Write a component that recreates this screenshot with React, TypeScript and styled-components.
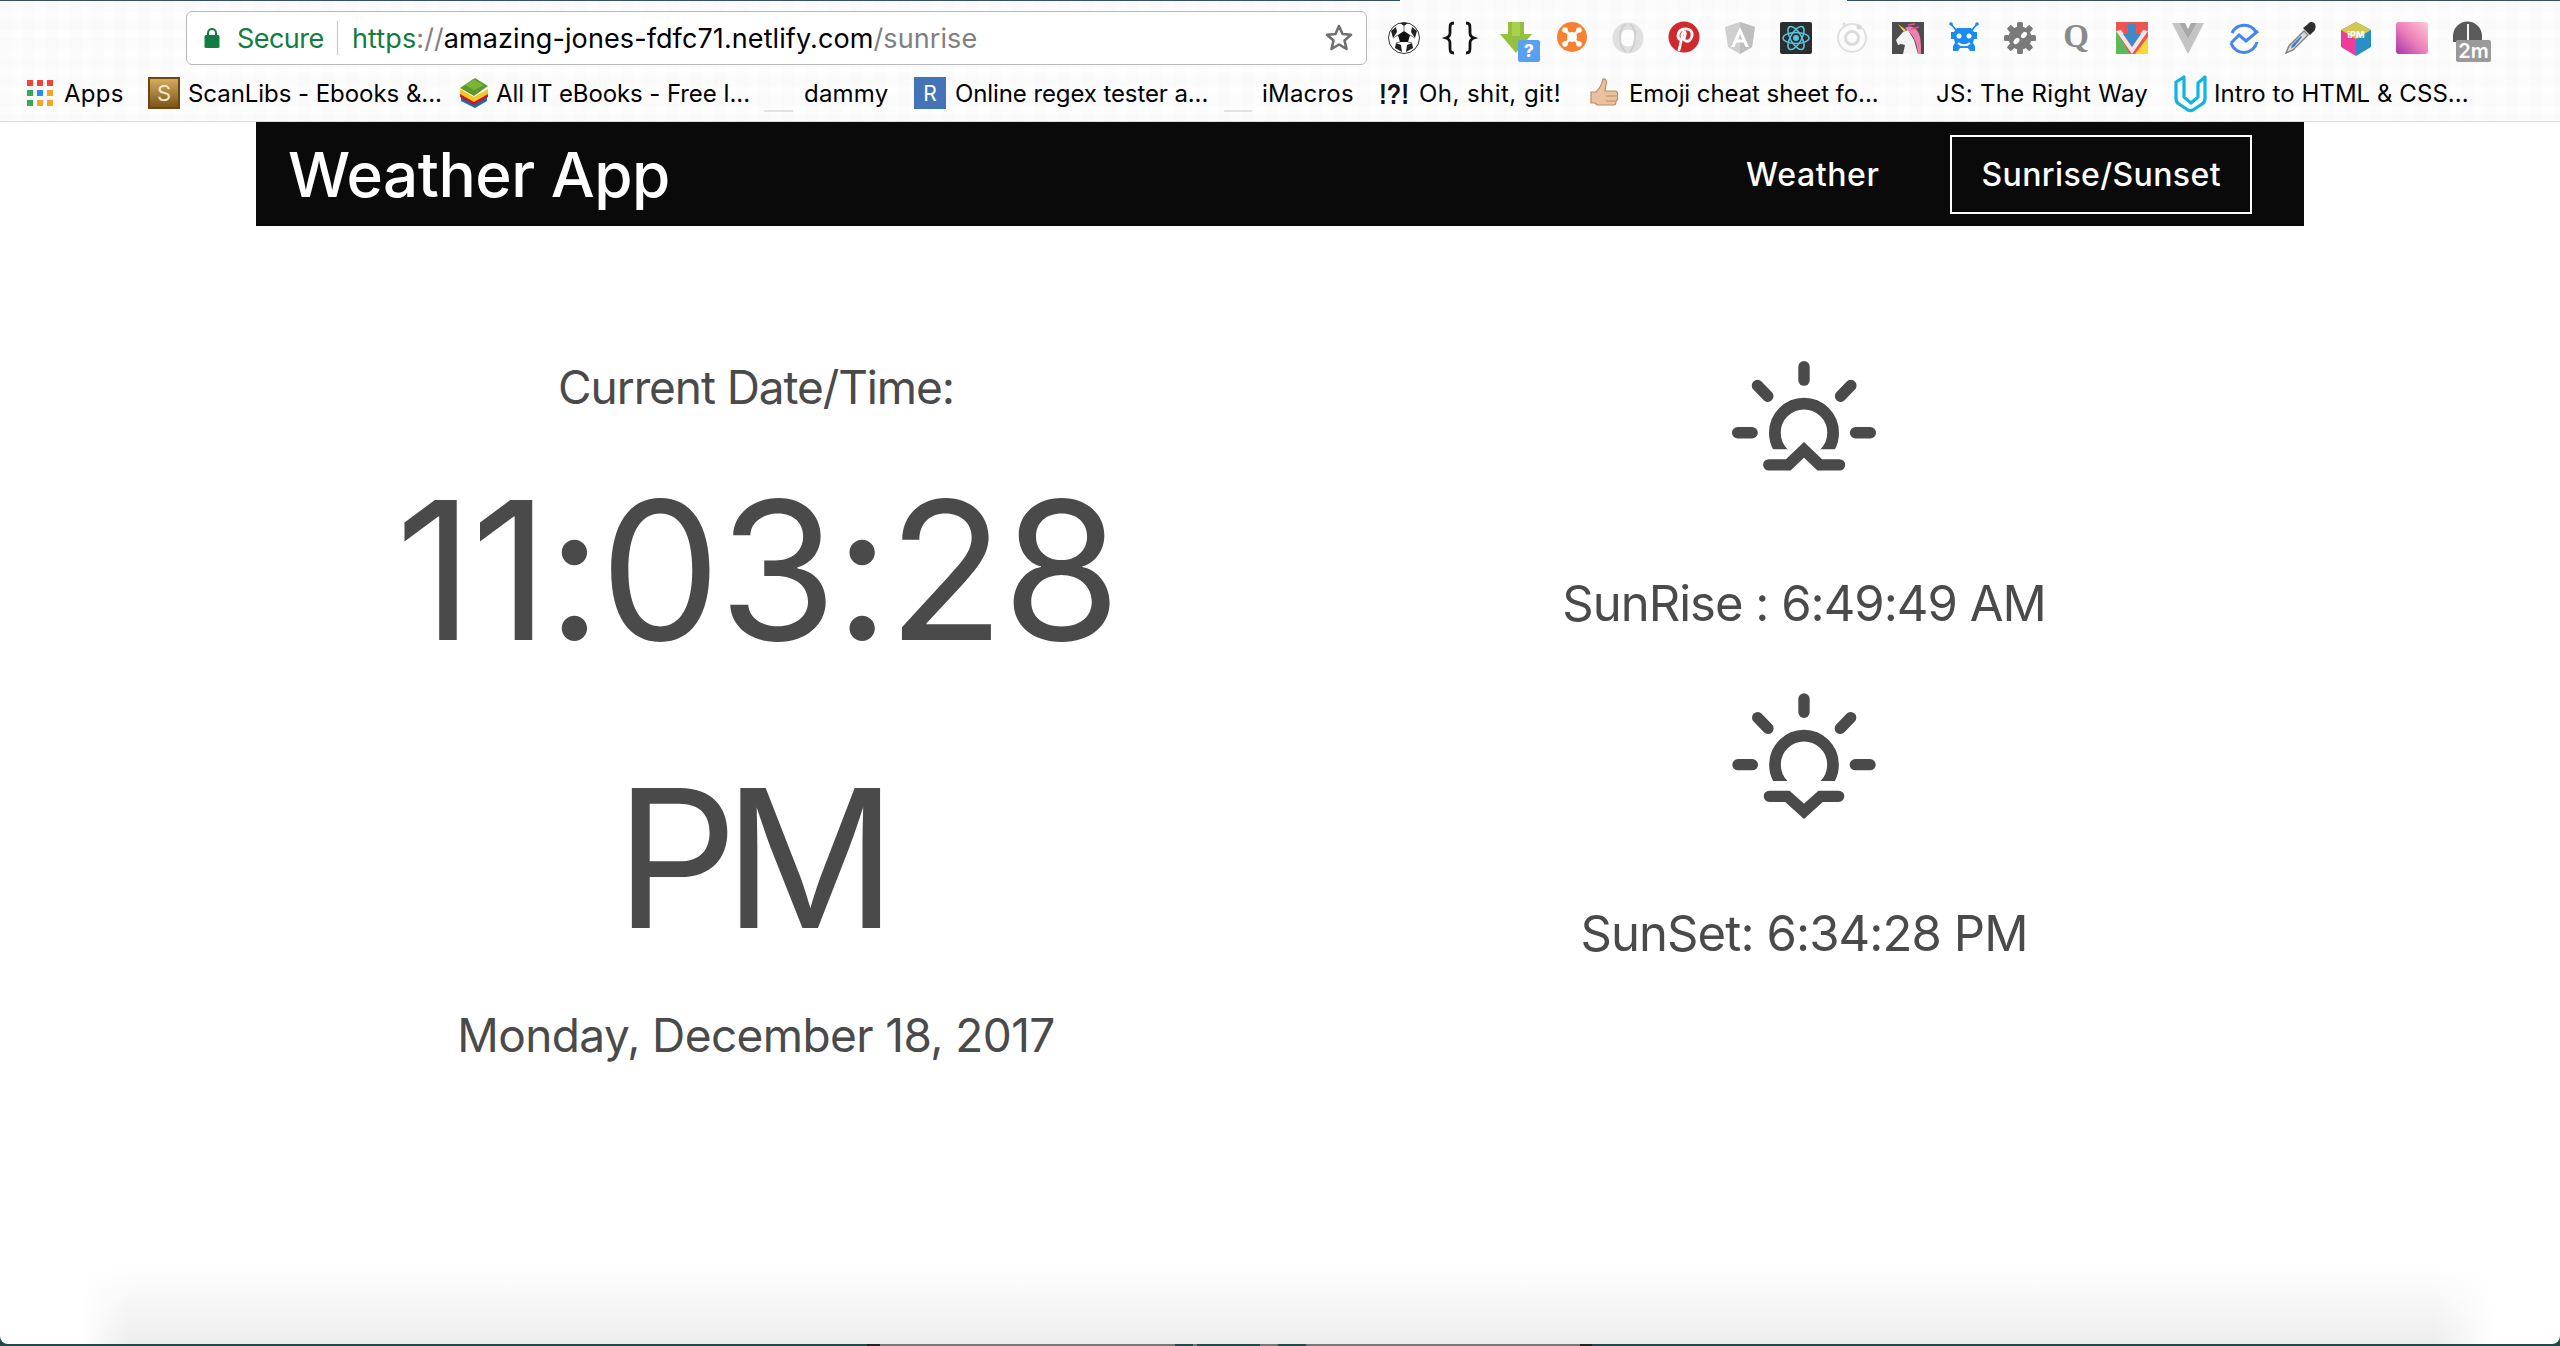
import React from "react";
import styled, { createGlobalStyle } from "styled-components";

const Global = createGlobalStyle`
  html, body { margin: 0; padding: 0; background: #1f4a4c; }
  body { font-family: Inter, "Noto Sans", sans-serif; color: #4a4a4a; }
  * { box-sizing: border-box; }
`;

const Screen = styled.div`
  width: 2560px;
  height: 1346px;
  overflow: hidden;
  display: flex;
  flex-direction: column;
  background: #1f4a4c;
`;

const Win = styled.div`
  position: relative;
  flex: 1;
  display: flex;
  flex-direction: column;
  background: #fff;
  border-radius: 0 0 8px 8px;
  overflow: hidden;
`;

const DesktopEdge = styled.div`
  height: 2px;
  background: linear-gradient(to right,
    #1f4a4c 867px, #222 867px, #222 880px, #777 880px, #777 1175px, #1f4a4c 1175px,
    #1f4a4c 1193px, #777 1193px, #777 1197px, #1f4a4c 1197px, #1f4a4c 1260px, #777 1260px,
    #777 1278px, #1f4a4c 1278px, #1f4a4c 1306px, #777 1306px, #777 1580px, #222 1580px,
    #222 1592px, #1f4a4c 1592px);
`;

const Chrome = styled.header`
  height: 122px;
  flex: none;
  display: flex;
  flex-direction: column;
  border-bottom: 1px solid #dcdcdc;
  background-color: #fefefe;
  background-image:
    repeating-linear-gradient(to right, rgba(0,0,0,0.009) 0 12px, transparent 12px 23px),
    repeating-linear-gradient(to bottom, rgba(0,0,0,0.009) 0 11px, transparent 11px 19px);
`;

const TopEdge = styled.div`
  height: 1px;
  flex: none;
  background: linear-gradient(to right, #33506f 1400px, transparent 1400px, transparent 1847px, #33506f 1847px);
`;

const ToolRow = styled.div`
  height: 54px;
  margin-top: 10px;
  padding-left: 186px;
  display: flex;
  align-items: center;
  flex: none;
`;

const Omnibox = styled.div`
  width: 1181px;
  height: 54px;
  background: #fff;
  border: 1px solid #b9b9b9;
  border-radius: 6px;
  display: flex;
  align-items: center;
  padding-left: 17px;
  font-size: 27px;
  flex: none;
  margin-right: 21px;
  white-space: nowrap;
`;

const Secure = styled.span`
  color: #137c42;
  margin-left: 17px;
  width: 88px;
  letter-spacing: -0.55px;
`;

const Divider = styled.span`
  width: 1px;
  height: 34px;
  background: #c4c4c4;
  margin: 0 14px 0 12px;
`;

const Url = styled.span<{ $c: string }>`
  color: ${(p) => p.$c};
  letter-spacing: 0.1px;
`;

const Star = styled.span`
  margin-left: auto;
  margin-right: 12px;
  display: flex;
`;

const Extensions = styled.div`
  display: flex;
  gap: 24px;
`;

const Ext = styled.svg`
  width: 32px;
  height: 36px;
  flex: none;
  display: block;
  overflow: visible;
`;

const BookmarkRow = styled.nav`
  height: 44px;
  margin-top: 6px;
  display: flex;
  align-items: center;
  flex: none;
  font-size: 24px;
  color: #000;
  white-space: nowrap;
`;

const Mark = styled.a<{ $x: number; $w: number; $gap?: number; $ls?: number }>`
  display: flex;
  align-items: center;
  gap: ${(p) => p.$gap ?? 8}px;
  margin-left: ${(p) => p.$x}px;
  flex: none;
  & > span {
    width: ${(p) => p.$w}px;
    display: block;
    letter-spacing: ${(p) => p.$ls ?? 0}px;
  }
`;

const Fav = styled.svg`
  width: 32px;
  height: 32px;
  display: block;
  flex: none;
  overflow: visible;
`;

const TallFav = styled(Fav)`
  height: 36px;
`;

const Blank = styled.i<{ $w: number }>`
  display: block;
  width: ${(p) => p.$w}px;
  height: 32px;
  border-bottom: 2px solid #e2e2e2;
  margin-bottom: -6px;
  flex: none;
`;

const Nav = styled.div`
  height: 104px;
  margin: 0 256px;
  flex: none;
  background: #0a0a0a;
  color: #fff;
  display: flex;
  align-items: center;
  padding: 0 52px 0 32px;
`;

const Brand = styled.div`
  font-size: 62px;
  font-weight: 500;
  letter-spacing: -0.5px;
  margin-right: auto;
`;

const NavLink = styled.a<{ $active?: boolean }>`
  display: flex;
  align-items: center;
  height: 79px;
  font-size: 32px;
  font-weight: 500;
  letter-spacing: ${(p) => (p.$active ? 0.4 : 0.6)}px;
  padding: 0 ${(p) => (p.$active ? 29 : 30)}px;
  border: 2px solid ${(p) => (p.$active ? "#fff" : "transparent")};
  margin-left: ${(p) => (p.$active ? "39px" : "0")};
`;

const Main = styled.main`
  margin: 0 256px;
  display: grid;
  grid-template-columns: 1000px 1000px;
  column-gap: 48px;
  flex: 1;
`;

const Column = styled.section`
  display: flex;
  flex-direction: column;
  align-items: center;
  text-align: center;
`;

const LeftColumn = styled(Column)`
  padding-top: 125px;
`;

const RightColumn = styled(Column)`
  padding-top: 135px;
`;

const Line = styled.div<{ $size: number; $ls: number }>`
  font-size: ${(p) => p.$size}px;
  line-height: 72px;
  letter-spacing: ${(p) => p.$ls}px;
  white-space: nowrap;
`;

const Clock = styled.div`
  display: flex;
  flex-direction: column;
  align-items: center;
  padding-top: 3px;
  margin-bottom: -3px;
`;

const ClockLine = styled.div<{ $ls: number; $pl?: number; $pr?: number }>`
  font-size: 192px;
  line-height: 288px;
  letter-spacing: ${(p) => p.$ls}px;
  padding-left: ${(p) => p.$pl ?? 0}px;
  padding-right: ${(p) => p.$pr ?? 0}px;
  white-space: nowrap;
`;

const SunSvg = styled.svg<{ $mt: number; $mb: number; $h: number }>`
  display: block;
  width: 144px;
  height: ${(p) => p.$h}px;
  margin-top: ${(p) => p.$mt}px;
  margin-bottom: ${(p) => p.$mb}px;
  color: #4a4a4a;
  overflow: visible;
`;

const Shade = styled.div`
  position: absolute;
  left: 80px;
  right: 65px;
  bottom: 0;
  height: 78px;
  pointer-events: none;
  background: linear-gradient(to bottom, rgba(238,238,238,0), #ededed);
  -webkit-mask-image: linear-gradient(to right, transparent, #000 50px, #000 calc(100% - 60px), transparent);
  mask-image: linear-gradient(to right, transparent, #000 50px, #000 calc(100% - 60px), transparent);
`;

const Rays = ({ c }: { c: number }) => (
  <g stroke="currentColor" strokeWidth="34" strokeLinecap="round" fill="none">
    <path d={`M312 ${c - 197}V${c - 157}`} />
    <path d={`M173 ${c - 141}L204 ${c - 109}`} />
    <path d={`M452 ${c - 141}L421 ${c - 109}`} />
    <path d={`M114 ${c}H157`} />
    <path d={`M510 ${c}H466`} />
  </g>
);

const SunArc = ({ c, id }: { c: number; id: string }) => (
  <>
    <clipPath id={id}>
      <rect x="190" y={c - 120} width="244" height="169" />
    </clipPath>
    <circle cx="312" cy={c} r="87" stroke="currentColor" strokeWidth="35" fill="none" clipPath={`url(#${id})`} />
  </>
);

const Sunrise = () => (
  <SunSvg viewBox="97 62 430 328" $h={110} $mt={0} $mb={97}>
    <Rays c={276} />
    <SunArc c={276} id="a1" />
    <path d="M207 372H265L312 327L359 372H418" stroke="currentColor" strokeWidth="34" strokeLinecap="round" fill="none" />
  </SunSvg>
);

const Sunset = () => (
  <SunSvg viewBox="97 1062 430 375" $h={125} $mt={54} $mb={79}>
    <Rays c={1274} />
    <SunArc c={1274} id="a2" />
    <path d="M208 1369H262L312 1414L362 1369H416" stroke="currentColor" strokeWidth="34" strokeLinecap="round" fill="none" />
  </SunSvg>
);

const Lock = () => (
  <svg width="16" height="22" viewBox="0 0 16 22">
    <path d="M4 9V6a4 4 0 0 1 8 0v3" stroke="#137c42" strokeWidth="2" fill="none" />
    <rect x="0.5" y="8" width="15" height="13" rx="1.5" fill="#137c42" />
  </svg>
);

const StarIcon = () => (
  <svg width="30" height="30" viewBox="0 0 30 30">
    <path d="M15 3l3.500 8 8.500.8-6.500 5.700 2 8.500-7.500-4.500-7.500 4.500 2-8.500L3 11.800l8.500-.8z" fill="none" stroke="#6f6f6f" strokeWidth="2.600" strokeLinejoin="round" />
  </svg>
);

const AppsFav = () => (
  <Fav viewBox="0 0 32 32">
    {[
      [3, 3, "#f44336"], [13, 3, "#f44336"], [23, 3, "#f44336"],
      [3, 13, "#34a853"], [13, 13, "#2a8af6"], [23, 13, "#f4a62a"],
      [3, 23, "#34a853"], [13, 23, "#f4a62a"], [23, 23, "#f4a62a"],
    ].map(([x, y, c], i) => (
      <rect key={i} x={x as number} y={y as number} width="6" height="6" fill={c as string} />
    ))}
  </Fav>
);

const ScanFav = () => (
  <Fav viewBox="0 0 32 32">
    <defs>
      <linearGradient id="sg" x1="0" y1="0" x2="0" y2="1">
        <stop offset="0" stopColor="#d5ad5c" />
        <stop offset="1" stopColor="#7c5518" />
      </linearGradient>
    </defs>
    <rect width="32" height="32" fill="#6f4610" />
    <rect x="2" y="2" width="28" height="28" fill="url(#sg)" />
    <text x="16" y="24" fontSize="22" fontFamily="Inter, sans-serif" textAnchor="middle" fill="#f3e7c9">S</text>
  </Fav>
);

const StackFav = () => (
  <Fav viewBox="0 0 32 32">
    <path d="M3 19L17 27L29 19L29 24L17 31L3 24Z" fill="#2467a8" />
    <path d="M2 15L16 24L30 15L30 20L16 28L2 20Z" fill="#c2182c" />
    <path d="M2 12L16 20L30 12L30 17L16 25L2 17Z" fill="#f4c81f" />
    <path d="M17 1L30 9L16 19L2 11Z" fill="#5d9a2c" />
    <path d="M15 2L26 8L16 13L7 8Z" fill="#7cb33c" />
  </Fav>
);

const RFav = () => (
  <Fav viewBox="0 0 32 32">
    <rect width="32" height="32" fill="#4473b8" />
    <text x="16" y="24" fontSize="21" fontFamily="Inter, sans-serif" textAnchor="middle" fill="#fff">R</text>
  </Fav>
);

const BangFav = () => (
  <Fav viewBox="0 0 32 32">
    <text x="0" y="27" fontSize="30" fontWeight="700" fontFamily="Liberation Sans, sans-serif" textLength="30" lengthAdjust="spacingAndGlyphs" fill="#111">!?!</text>
  </Fav>
);

const ThumbFav = () => (
  <Fav viewBox="0 0 32 32">
    <path d="M3 15h5c3-3 6-7 7-13 3-1 4 3 3 6l-1 6h11c2 1 2 4 1 5 1 2 1 4-1 5 0 2 0 4-2 4H9l-2-2H3z" fill="#e9c19c" stroke="#b98d67" strokeWidth="1.200" />
    <path d="M18 19h10M18 24h9" stroke="#b98d67" strokeWidth="1.200" />
  </Fav>
);

const UdacityFav = () => (
  <TallFav viewBox="0 0 32 36">
    <path d="M2 7l8-5v20l7 6 7-6V8l7-6v21c0 3-1 5-3 6l-9 6c-2 1-3 1-5 0l-9-6c-2-1-3-3-3-6z" fill="none" stroke="#0fb4e4" strokeWidth="3.200" strokeLinejoin="round" />
  </TallFav>
);

const Soccer = () => (
  <Ext viewBox="0 0 32 36">
    <circle cx="16" cy="18" r="15.500" fill="#fff" stroke="#333" strokeWidth="1" />
    <path d="M16 11l6 4-2 7h-8l-2-7z" fill="#111" />
    <path d="M12 3h8l-4 3zM3 11l5-4 1 5-4 6zM29 11l-5-4-1 5 4 6zM7 28l1-5 5 2 1 7zM25 28l-1-5-5 2-1 7z" fill="#222" />
    <path d="M16 6v5M10 15l-5 3M22 15l5 3M12 22l-4 1M20 22l4 1" stroke="#777" strokeWidth="1" />
  </Ext>
);

const Braces = () => (
  <Ext viewBox="0 0 32 36">
    <path d="M10 3c-4 0-4 2-4 6v4c0 3-1 4-4 5 3 1 4 2 4 5v4c0 4 0 6 4 6" fill="none" stroke="#111" strokeWidth="2.800" />
    <path d="M22 3c4 0 4 2 4 6v4c0 3 1 4 4 5-3 1-4 2-4 5v4c0 4 0 6-4 6" fill="none" stroke="#111" strokeWidth="2.800" />
  </Ext>
);

const GreenDownload = () => (
  <Ext viewBox="0 0 32 36">
    <path d="M8 2h16v12h8L16 33 0 14h8z" fill="#93c13d" />
    <path d="M12 2h8v14h-8z" fill="#a9d04f" />
    <rect x="18" y="20" width="22" height="22" rx="2" fill="#58a0f2" />
    <text x="29" y="37" fontSize="17" fontWeight="800" fontFamily="Inter, sans-serif" textAnchor="middle" fill="#fff">?</text>
  </Ext>
);

const OrangeHub = () => (
  <Ext viewBox="0 0 32 36">
    <circle cx="16" cy="17" r="15" fill="#f58233" />
    <circle cx="16" cy="17" r="5" fill="#fff" />
    <path d="M9 10l14 14M23 10L9 24" stroke="#fff" strokeWidth="2.500" />
    <circle cx="9" cy="10" r="2.800" fill="#fff" />
    <circle cx="23" cy="10" r="2.800" fill="#fff" />
    <circle cx="9" cy="24" r="2.800" fill="#fff" />
    <circle cx="23" cy="24" r="2.800" fill="#fff" />
  </Ext>
);

const JsonRing = () => (
  <Ext viewBox="0 0 32 36">
    <circle cx="16" cy="18" r="12" fill="none" stroke="#e0e0e0" strokeWidth="7" />
    <path d="M14 4c-8 4-8 22 0 28M18 4c8 6 6 20 0 28" fill="none" stroke="#cfcfcf" strokeWidth="2" />
  </Ext>
);

const Pinterest = () => (
  <Ext viewBox="0 0 32 36">
    <circle cx="16" cy="17" r="15.500" fill="#cf2b2f" />
    <path d="M11 19c-2-3-1-9 5-10 5-1 9 2 8 7-1 4-4 6-6 5-1 0-2-1-2-2 1-3 2-6 1-7-2 0-4 3-3 5l-2 9-1 4" fill="none" stroke="#fff" strokeWidth="2.800" strokeLinecap="round" />
  </Ext>
);

const AngularGrey = () => (
  <Ext viewBox="0 0 32 36">
    <path d="M16 2L1 7l3 20 12 7 12-7 3-20z" fill="#cfcfcf" />
    <path d="M16 2v32l12-7 3-20z" fill="#bfbfbf" />
    <path d="M16 7L7 27h3.500l2-4.500h7l2 4.500H25zM14 19.500L16 14l2 5.500z" fill="#fff" />
  </Ext>
);

const ReactFav = () => (
  <Ext viewBox="0 0 32 36">
    <rect y="2" width="32" height="32" rx="2" fill="#2b2d2f" />
    <g fill="none" stroke="#58c4dc" strokeWidth="1.500">
      <ellipse cx="16" cy="18" rx="13" ry="5.500" />
      <ellipse cx="16" cy="18" rx="13" ry="5.500" transform="rotate(60 16 18)" />
      <ellipse cx="16" cy="18" rx="13" ry="5.500" transform="rotate(120 16 18)" />
    </g>
    <circle cx="16" cy="18" r="3" fill="#58c4dc" />
  </Ext>
);

const IonicGrey = () => (
  <Ext viewBox="0 0 32 36">
    <circle cx="16" cy="18" r="14" fill="none" stroke="#e0e0e0" strokeWidth="2" />
    <circle cx="16" cy="18" r="6.500" fill="none" stroke="#dcdcdc" strokeWidth="3" />
    <circle cx="23" cy="7" r="2.500" fill="#d6d6d6" />
    <circle cx="8" cy="4" r="1.500" fill="#dcdcdc" />
  </Ext>
);

const Unicorn = () => (
  <Ext viewBox="0 0 32 36">
    <rect y="2" width="32" height="32" fill="#4d4d4d" />
    <path d="M4 20l7-8 5-2 6 10 4 14H11l2-9-4-1-3 1z" fill="#f3f3f3" />
    <path d="M12 12L6 4l8 6z" fill="#f2d24a" />
    <path d="M13 8c6-4 13 0 15 9 1 5 1 11 1 17h-3c-1-10-3-18-13-26z" fill="#f07fb2" />
    <path d="M16 5l7-1M19 9l8-2" stroke="#e94f97" strokeWidth="1.500" />
  </Ext>
);

const Bot = () => (
  <Ext viewBox="0 0 32 36">
    <path d="M8 10L3 4M24 10l5-6" stroke="#1a8cf0" strokeWidth="1.800" />
    <circle cx="3" cy="4" r="1.800" fill="#1a8cf0" />
    <circle cx="29" cy="4" r="1.800" fill="#1a8cf0" />
    <path d="M9 8h14l3 4h3v7h-3l-1 4 2 3v5h-5l-2-3h-8l-2 3H5v-5l2-3-1-4H3v-7h3z" fill="#1a8cf0" />
    <circle cx="11" cy="16" r="2.500" fill="#fff" />
    <circle cx="21" cy="16" r="2.500" fill="#fff" />
    <path d="M10 23c3 3 9 3 12 0" fill="none" stroke="#fff" strokeWidth="2" />
  </Ext>
);

const Cog = () => (
  <Ext viewBox="0 0 32 36">
    <g fill="#7a7a7a">
      <circle cx="16" cy="18" r="11.500" />
      {[0, 45, 90, 135, 180, 225, 270, 315].map((a) => (
        <rect key={a} x="13" y="2" width="6" height="6" rx="1.500" transform={`rotate(${a} 16 18)`} />
      ))}
    </g>
    <ellipse cx="12.500" cy="21" rx="2.500" ry="3.500" fill="#fafafa" transform="rotate(40 12.500 21)" />
    <ellipse cx="20" cy="15" rx="2.500" ry="3.500" fill="#fafafa" transform="rotate(40 20 15)" />
  </Ext>
);

const QIcon = () => (
  <Ext viewBox="0 0 32 36">
    <text x="16" y="27" fontSize="33" fontWeight="700" fontFamily="Liberation Serif, serif" textAnchor="middle" fill="#8a8a8a">Q</text>
  </Ext>
);

const ChromeDl = () => (
  <Ext viewBox="0 0 32 36">
    <rect y="2" width="32" height="32" fill="#ef5350" />
    <path d="M0 11l14 23H0z" fill="#5cb85c" />
    <path d="M32 17L19 34h13z" fill="#fdd835" />
    <path d="M0 11l16 23 16-23-5-1-11 16L5 10z" fill="#f5f5f5" opacity="0.9" />
    <path d="M12 4h8v10h5L16 27 7 14h5z" fill="#4288c7" />
  </Ext>
);

const VueGrey = () => (
  <Ext viewBox="0 0 32 36">
    <path d="M0 3h7l9 16 9-16h7L16 34z" fill="#c4c4c4" />
    <path d="M7 3h6l3 6 3-6h6l-9 16z" fill="#a8a8a8" />
  </Ext>
);

const Wave = () => (
  <Ext viewBox="0 0 32 36">
    <path d="M4 13A13.500 13.500 0 0 1 28 12" fill="none" stroke="#4585ee" strokeWidth="3" />
    <path d="M29 22A13.500 13.500 0 0 1 3 23" fill="none" stroke="#4585ee" strokeWidth="3" />
    <path d="M3 23L11 15L18 21L30 11" fill="none" stroke="#4585ee" strokeWidth="3" />
  </Ext>
);

const Dropper = () => (
  <Ext viewBox="0 0 32 36">
    <path d="M20 11L5 26 2 33l7-3 15-15z" fill="#d8dde2" stroke="#808080" strokeWidth="1.400" />
    <path d="M8 25l9-9 1 1-8 10-3 1z" fill="#3e79d6" />
    <path d="M19 8l7 7 3-3c3-2 3-6 2-8s-5-3-7 0z" fill="#2e2e2e" />
  </Ext>
);

const Ipm = () => (
  <Ext viewBox="0 0 32 36">
    <path d="M16 2L1 10v17l15 9z" fill="#ee3b9c" />
    <path d="M16 2l15 8v17l-15 9z" fill="#2a8ec7" />
    <path d="M16 2L1 10l15 9 15-9z" fill="#d3c94e" />
    <text x="16" y="18" fontSize="9" fontWeight="800" fontFamily="Inter, sans-serif" textAnchor="middle" fill="#fff">iPM</text>
  </Ext>
);

const PinkGrad = () => (
  <Ext viewBox="0 0 32 36">
    <defs>
      <linearGradient id="pg" x1="0" y1="1" x2="1" y2="0">
        <stop offset="0" stopColor="#a835ac" />
        <stop offset="0.5" stopColor="#ee82b8" />
        <stop offset="1" stopColor="#ffc8d6" />
      </linearGradient>
    </defs>
    <rect y="2" width="32" height="32" rx="3" fill="url(#pg)" />
  </Ext>
);

const Timer = () => (
  <Ext viewBox="0 0 32 36">
    <path d="M1 22V16a14.500 14.500 0 0 1 29 0v6z" fill="#5a5a5a" />
    <rect x="15" y="4" width="2" height="16" fill="#f4f4f4" />
    <rect x="4" y="20" width="35" height="22" rx="2" fill="#9a9a9a" />
    <text x="21.500" y="38" fontSize="20" fontWeight="600" fontFamily="Inter, sans-serif" textAnchor="middle" fill="#fff">2m</text>
  </Ext>
);

export default function App() {
  return (
    <Screen>
      <Global />
      <Win>
        <Chrome>
          <TopEdge />
          <ToolRow>
            <Omnibox>
              <Lock />
              <Secure>Secure</Secure>
              <Divider />
              <Url $c="#137c42">https</Url>
              <Url $c="#808080">://</Url>
              <Url $c="#000">amazing-jones-fdfc71.netlify.com</Url>
              <Url $c="#808080">/sunrise</Url>
              <Star><StarIcon /></Star>
            </Omnibox>
            <Extensions>
              <Soccer /><Braces /><GreenDownload /><OrangeHub /><JsonRing /><Pinterest />
              <AngularGrey /><ReactFav /><IonicGrey /><Unicorn /><Bot /><Cog /><QIcon />
              <ChromeDl /><VueGrey /><Wave /><Dropper /><Ipm /><PinkGrad /><Timer />
            </Extensions>
          </ToolRow>
          <BookmarkRow>
            <Mark $x={24} $w={60} $ls={0.3}><AppsFav /><span>Apps</span></Mark>
            <Mark $x={24} $w={252} $ls={-0.05}><ScanFav /><span>ScanLibs - Ebooks &amp;...</span></Mark>
            <Mark $x={18} $w={253} $gap={6} $ls={-0.1}><StackFav /><span>All IT eBooks - Free I...</span></Mark>
            <Mark $x={15} $w={82} $gap={11} $ls={0.2}><Blank $w={29} /><span>dammy</span></Mark>
            <Mark $x={28} $w={252} $gap={9} $ls={-0.1}><RFav /><span>Online regex tester a...</span></Mark>
            <Mark $x={17} $w={91} $gap={10} $ls={0.2}><Blank $w={28} /><span>iMacros</span></Mark>
            <Mark $x={26} $w={142} $gap={8} $ls={0.45}><BangFav /><span>Oh, shit, git!</span></Mark>
            <Mark $x={27} $w={249} $gap={9} $ls={-0.07}><ThumbFav /><span>Emoji cheat sheet fo...</span></Mark>
            <Mark $x={58} $w={212} $ls={0.3}><span>JS: The Right Way</span></Mark>
            <Mark $x={26} $w={253} $ls={0.05}><UdacityFav /><span>Intro to HTML &amp; CSS...</span></Mark>
          </BookmarkRow>
        </Chrome>
        <Nav>
          <Brand>Weather App</Brand>
          <NavLink>Weather</NavLink>
          <NavLink $active>Sunrise/Sunset</NavLink>
        </Nav>
        <Main>
          <LeftColumn>
            <Line $size={46} $ls={-1.1}>Current Date/Time:</Line>
            <Clock>
              <ClockLine $ls={-2.4} $pl={2}>11:03:28</ClockLine>
              <ClockLine $ls={-14} $pr={14}>PM</ClockLine>
            </Clock>
            <Line $size={46} $ls={-0.6}>Monday, December 18, 2017</Line>
          </LeftColumn>
          <RightColumn>
            <Sunrise />
            <Line $size={49} $ls={-1}>SunRise : 6:49:49 AM</Line>
            <Sunset />
            <Line $size={49} $ls={-0.9}>SunSet: 6:34:28 PM</Line>
          </RightColumn>
        </Main>
        <Shade />
      </Win>
      <DesktopEdge />
    </Screen>
  );
}
